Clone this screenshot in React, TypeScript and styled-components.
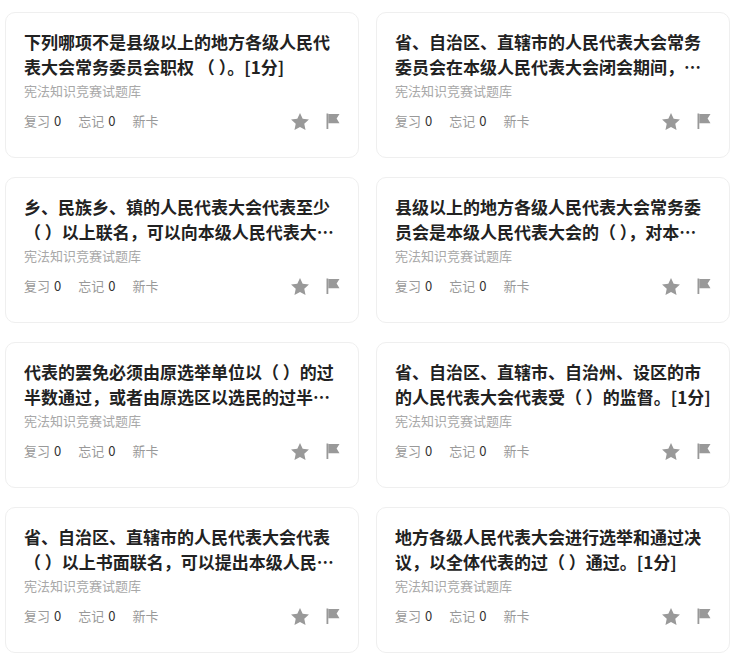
import * as React from 'react';
import styled, { createGlobalStyle } from 'styled-components';

const GlobalStyle = createGlobalStyle`
  html, body {
    margin: 0;
    padding: 0;
    background: #fff;
    font-family: 'Noto Sans CJK SC', 'Noto Sans', 'Liberation Sans', sans-serif;
  }
`;

const Grid = styled.div`
  display: grid;
  grid-template-columns: 354px 354px;
  column-gap: 17px;
  row-gap: 19px;
  padding: 12px 16px 0 5px;
`;

const Card = styled.div`
  box-sizing: border-box;
  height: 146px;
  padding: 16px 18px 0 18px;
  border: 1px solid #efefef;
  border-radius: 10px;
  background: #fff;
  display: flex;
  flex-direction: column;
`;

const Title = styled.div`
  font-size: 17px;
  line-height: 25px;
  font-weight: 700;
  color: #222;
  display: -webkit-box;
  -webkit-line-clamp: 2;
  -webkit-box-orient: vertical;
  overflow: hidden;
  height: 50px;
`;

const Source = styled.div`
  margin-top: 2px;
  font-size: 13px;
  line-height: 20px;
  color: #a8a8a8;
`;

const Footer = styled.div`
  margin-top: 10px;
  display: flex;
  align-items: center;
  height: 20px;
`;

const Stats = styled.div`
  display: flex;
  gap: 17px;
  flex: 1;
  font-size: 13px;
  line-height: 20px;
`;

const Stat = styled.span`
  color: #999;
`;

const Count = styled.span`
  color: #333;
  margin-left: 4px;
`;

const Actions = styled.div`
  display: flex;
  align-items: center;
  gap: 17px;
`;

const IconButton = styled.span<{ $w: number }>`
  display: flex;
  width: ${(p) => p.$w}px;
  height: 16px;
  color: #999;
  cursor: pointer;
`;

const StarIcon = () => (
  <svg width="18" height="17" viewBox="1.3 1.5 21.4 20.3" fill="currentColor">
    <path d="M12 1.5l3.2 6.9 7.5.9-5.6 5.1 1.5 7.4L12 18.1l-6.6 3.7 1.5-7.4L1.3 9.3l7.5-.9z" />
  </svg>
);

const FlagIcon = () => (
  <svg width="14" height="16" viewBox="0 0 14 16" fill="currentColor">
    <rect x="0.5" y="0.5" width="1.8" height="15.5" />
    <path d="M2.3 1H13.5L10.6 5.6L13.5 10.2H2.3Z" />
  </svg>
);

type Question = { title: string };

const questions: Question[] = [
  { title: '下列哪项不是县级以上的地方各级人民代表大会常务委员会职权 （ ）。[1分]' },
  {
    title:
      '省、自治区、直辖市的人民代表大会常务委员会在本级人民代表大会闭会期间，根据本行政区域的具体情况和实际需要，可以制定和颁布（ ）。[1分]',
  },
  {
    title:
      '乡、民族乡、镇的人民代表大会代表至少（ ）以上联名，可以向本级人民代表大会提出属于本级人民代表大会职权范围内的议案。[1分]',
  },
  {
    title: '县级以上的地方各级人民代表大会常务委员会是本级人民代表大会的（ ），对本级人民代表大会负责并报告工作。[1分]',
  },
  { title: '代表的罢免必须由原选举单位以（ ）的过半数通过，或者由原选区以选民的过半数通过。[1分]' },
  { title: '省、自治区、直辖市、自治州、设区的市的人民代表大会代表受（ ）的监督。[1分]' },
  {
    title:
      '省、自治区、直辖市的人民代表大会代表（ ）以上书面联名，可以提出本级人民代表大会常务委员会组成人员的罢免案。[1分]',
  },
  { title: '地方各级人民代表大会进行选举和通过决议，以全体代表的过（ ）通过。[1分]' },
];

const QuestionCard = ({ title }: Question) => (
  <Card>
    <Title>{title}</Title>
    <Source>宪法知识竞赛试题库</Source>
    <Footer>
      <Stats>
        <Stat>
          复习<Count>0</Count>
        </Stat>
        <Stat>
          忘记<Count>0</Count>
        </Stat>
        <Stat>新卡</Stat>
      </Stats>
      <Actions>
        <IconButton $w={18}>
          <StarIcon />
        </IconButton>
        <IconButton $w={14}>
          <FlagIcon />
        </IconButton>
      </Actions>
    </Footer>
  </Card>
);

export default function App() {
  return (
    <>
      <GlobalStyle />
      <Grid>
        {questions.map((q, i) => (
          <QuestionCard key={i} {...q} />
        ))}
      </Grid>
    </>
  );
}
